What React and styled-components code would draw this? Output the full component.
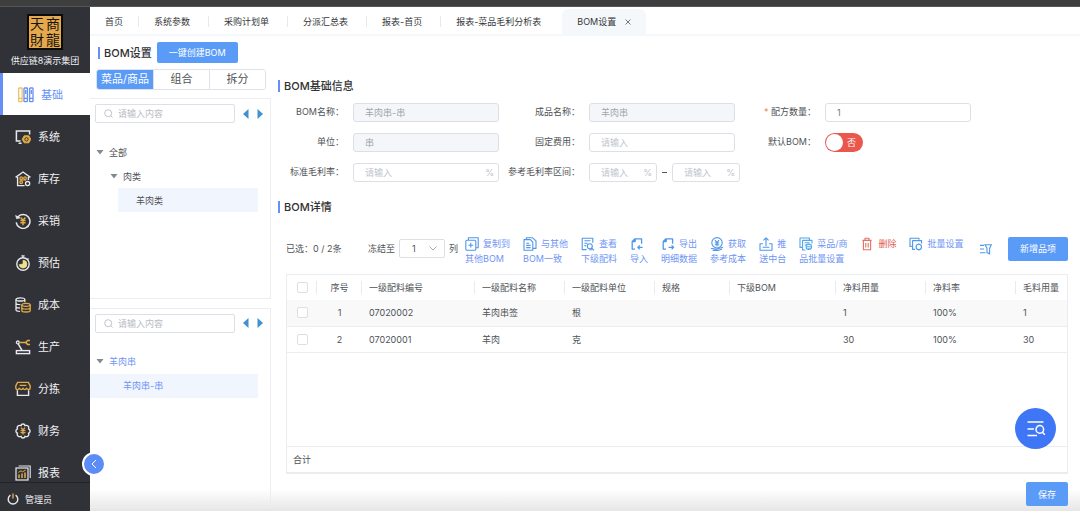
import React from "react";
import styled, { createGlobalStyle } from "styled-components";

const BLUE = "#5b9bf8";
const LINK = "#7095f4";
const GOLD = "#e2ab45";
const LIGHT = "#e9e9ec";

/* ---------- sidebar icons ---------- */

const SideSvg = ({ children }) => (
  <svg width="16" height="16" viewBox="0 0 16 16" fill="none" stroke={LIGHT} strokeWidth="1.3">
    {children}
  </svg>
);

const BasicIcon = () => (
  <SideSvg>
    <rect x="0.7" y="1" width="3.4" height="13.6" rx="0.6" stroke="#efc15c" />
    <path d="M0.7 11.4h3.4" stroke="#efc15c" />
    <rect x="6" y="1" width="3.4" height="13.6" rx="0.6" stroke="#6690f5" />
    <path d="M6 11.4h3.4M7.7 3v4" stroke="#6690f5" />
    <rect x="11.6" y="1" width="3.4" height="13.6" rx="0.6" stroke="#6690f5" />
    <path d="M11.6 11.4H15M13.3 3v4" stroke="#6690f5" />
  </SideSvg>
);

const SystemIcon = () => (
  <SideSvg>
    <path d="M5.6 12H1.4V2h13.2v3.4M3.6 14.2h3" strokeWidth="1.5" />
    <path d="M9.2 6.8h4.6l2 3.5-2 3.5H9.2l-2-3.5z" fill={GOLD} stroke={GOLD} strokeWidth="1" />
    <circle cx="11.5" cy="10.3" r="1.7" stroke="#313238" strokeWidth="0.9" />
  </SideSvg>
);

const StockIcon = () => (
  <SideSvg>
    <path d="M0.6 6.4 8 1l7.4 5.4M2.6 6v8.6h7M13.4 6v3" strokeWidth="1.4" />
    <circle cx="6.2" cy="7.2" r="1.3" stroke={GOLD} />
    <circle cx="10" cy="7.2" r="1.3" stroke={GOLD} />
    <circle cx="6.2" cy="11.2" r="1.3" stroke={GOLD} />
    <path d="M4.6 9.2h6.6" stroke={GOLD} strokeWidth="0.9" />
    <circle cx="12.6" cy="12.6" r="2.1" />
  </SideSvg>
);

const BuyIcon = () => (
  <SideSvg>
    <path d="M2.6 4.2A6.9 6.9 0 1 1 1.2 9.4" strokeWidth="1.5" />
    <path d="M0.6 2.4l1 3.4 3.4-.9z" fill={LIGHT} strokeWidth="0.6" />
    <path d="M5.6 4.4 8 7.2l2.4-2.8M5.4 7.6h5.2M5.4 9.8h5.2M8 7.2v5" stroke={GOLD} strokeWidth="1.5" />
  </SideSvg>
);

const ForecastIcon = () => (
  <SideSvg>
    <circle cx="8" cy="9" r="6.2" strokeWidth="1.4" />
    <path d="M6.4 0.8h3.2M8 1v2M12.6 3.4l1 1" />
    <path d="M8 5.2A3.9 3.9 0 1 1 4.2 9.6L8 9z" fill="#efe08c" stroke="#efe08c" strokeWidth="0.6" />
  </SideSvg>
);

const CostIcon = () => (
  <SideSvg>
    <ellipse cx="5.4" cy="2.4" rx="4.4" ry="1.6" />
    <path d="M1 2.4v10.4c0 .9 1.8 1.6 4 1.6M1 6c0 .9 2 1.6 4.4 1.6M1 9.4c0 .9 1.8 1.6 4 1.6M9.8 2.4v2.8" />
    <ellipse cx="11" cy="7.8" rx="4.2" ry="1.5" stroke={GOLD} />
    <path d="M6.8 7.8v5.6c0 .9 1.9 1.6 4.2 1.6s4.2-.7 4.2-1.6V7.8M6.8 10.6c0 .9 1.9 1.6 4.2 1.6s4.2-.7 4.2-1.6" stroke={GOLD} />
  </SideSvg>
);

const ProduceIcon = () => (
  <SideSvg>
    <rect x="1.4" y="11.6" width="13.2" height="3" strokeWidth="1.4" />
    <circle cx="2.8" cy="3.4" r="1.4" />
    <path d="M3.2 4.8 7 11.4" strokeWidth="1.5" />
    <path d="M4.4 3.4h6M15 1.4h-2.4l-2 2 2 2H15" stroke={GOLD} strokeWidth="1.5" />
  </SideSvg>
);

const SortIcon = () => (
  <SideSvg>
    <path d="M2.4 9.2v5.2h11.2V9.2" strokeWidth="1.4" />
    <path d="M2.6 1.4h10.8l1.8 3.6v1.8c0 2.4-3.4 2.4-3.6 0-.2 2.4-3.4 2.4-3.6 0-.2 2.4-3.4 2.4-3.6 0-.2 2.4-3.6 2.4-3.6 0V5z" stroke={GOLD} strokeWidth="1.4" />
    <path d="M4.6 4.4h6.8" stroke={GOLD} />
  </SideSvg>
);

const FinanceIcon = () => (
  <SideSvg>
    <path
      d="M6 2.600C6.400.4 9.600.4 10 2.600c2.400-.8 4.600 1 3.600 3.200 2 1 2 3.400 0 4.400 1 2.200-1.200 4-3.600 3.200-.4 2.200-3.600 2.200-4 0-2.400.8-4.600-1-3.600-3.200-2-1-2-3.400 0-4.400-1-2.200 1.200-4 3.600-3.200z"
      strokeWidth="1.4"
    />
    <path d="M6 4.8 8 7l2-2.2M5.6 7.6h4.8M5.6 9.6h4.8M8 7v4.4" stroke={GOLD} strokeWidth="1.3" />
  </SideSvg>
);

const ReportIcon = () => (
  <SideSvg>
    <path d="M3.6 1h11.6v12" strokeWidth="1.1" />
    <rect x="1" y="3" width="12" height="12" strokeWidth="1.2" />
    <path d="M4 13V9.6M7 13V8.6M10 13V7.6" stroke={GOLD} strokeWidth="1.5" />
    <path d="M3.4 7.4 6 5.8l1.6 1L10.6 5" stroke={GOLD} strokeWidth="1" />
  </SideSvg>
);

const menus = [
  { label: "基础", icon: BasicIcon, active: true },
  { label: "系统", icon: SystemIcon },
  { label: "库存", icon: StockIcon },
  { label: "采销", icon: BuyIcon },
  { label: "预估", icon: ForecastIcon },
  { label: "成本", icon: CostIcon },
  { label: "生产", icon: ProduceIcon },
  { label: "分拣", icon: SortIcon },
  { label: "财务", icon: FinanceIcon },
  { label: "报表", icon: ReportIcon },
];

/* ---------- toolbar icons ---------- */

const ToolSvg = ({ children, color = "#4f97ea" }) => (
  <svg width="14" height="14" viewBox="0 0 14 14" fill="none" stroke={color} strokeWidth="1.1" strokeLinejoin="round">
    {children}
  </svg>
);

const CopyIcon = () => (
  <ToolSvg>
    <rect x="0.8" y="3.2" width="10" height="10" rx="1" />
    <path d="M3.4 3V.8h9.8v10H11M5.8 5.8v4.8M3.4 8.2h4.8" />
  </ToolSvg>
);

const SameIcon = () => (
  <ToolSvg>
    <path d="M1 2.6h6.4l2.4 2.6v8H1z" />
    <path d="M3.4 2.4V.8h6.2l3.4 3v7.6h-3M3.2 6.2h3M3.2 8.4h4.4M3.2 10.6h4.4" />
  </ToolSvg>
);

const ViewIcon = () => (
  <ToolSvg>
    <path d="M5.6 12.6H1.2V1.2h10.6v4.6M3.4 3.8h6M3.4 6.2h3.2M3.4 8.6h1.8" />
    <circle cx="8.8" cy="9.2" r="2.5" />
    <path d="m10.6 11 2.4 2.4M8.2 12.8h3" />
  </ToolSvg>
);

const ImportIcon = () => (
  <ToolSvg>
    <path d="M5 12.2H2.2V4.4L5 1.8h6.6v5M5.2 2v2.6H2.4" strokeWidth="1.3" />
    <path d="M12.6 10.4H8M9.8 8.4l-2 2 2 2" strokeWidth="1.3" />
  </ToolSvg>
);

const ExportIcon = () => (
  <ToolSvg>
    <path d="M5 12.2H2.2V4.4L5 1.8h6.6v5M5.2 2v2.6H2.4" strokeWidth="1.3" />
    <path d="M7.6 10.4h4.8M10.6 8.4l2 2-2 2" strokeWidth="1.3" />
  </ToolSvg>
);

const FetchIcon = () => (
  <ToolSvg>
    <circle cx="7" cy="5.8" r="5.2" />
    <path d="M5 3.2 7 5.6l2-2.4M4.8 6h4.4M4.8 7.8h4.4M7 5.6v3.8M1 11.6c2-.8 3.4 1 6 .4l6-1.8M2.6 13.4h5.6l4-1.4" />
  </ToolSvg>
);

const PushIcon = () => (
  <ToolSvg>
    <path d="M4 6.8H1v6.4h12V6.8h-3M3.6 10.2h6.8" />
    <path d="M7 9V1M4.4 3.4 7 .8l2.6 2.6" />
  </ToolSvg>
);

const DishIcon = () => (
  <ToolSvg color="#52a5ec">
    <path d="M3.2 10.4H1V1h9.4v2" />
    <path d="M6.4 13H3.6V3.4H13v3M5.6 5.8h5M5.6 8h1.8" />
    <circle cx="9.8" cy="9.8" r="2.7" />
    <path d="M8 9.8h3.6M9.8 11v2" />
  </ToolSvg>
);

const TrashIcon = () => (
  <ToolSvg color="#e4705f">
    <path d="M2.4 3.4h9.2M5 3.2V1.2h4v2M3.400 3.6v9.2h7.200V3.6M5.8 6v4.6M8.2 6v4.6" />
  </ToolSvg>
);

const BatchIcon = () => (
  <ToolSvg>
    <path d="M2.8 9.4H1V1.2h9v1.6" />
    <path d="M6 12.4H3.6V3.6h9v3" />
    <circle cx="9.8" cy="10" r="2.7" />
    <path d="M9.8 6.6v1M9.8 12.4v1" />
  </ToolSvg>
);

const tools = [
  { icon: CopyIcon, lines: ["复制到", "其他BOM"] },
  { icon: SameIcon, lines: ["与其他", "BOM一致"] },
  { icon: ViewIcon, lines: ["查看", "下级配料"] },
  { icon: ImportIcon, lines: ["", "导入"] },
  { icon: ExportIcon, lines: ["导出", "明细数据"] },
  { icon: FetchIcon, lines: ["获取", "参考成本"] },
  { icon: PushIcon, lines: ["推", "送中台"] },
  { icon: DishIcon, lines: ["菜品/商", "品批量设置"] },
  { icon: TrashIcon, lines: ["删除"], danger: true },
  { icon: BatchIcon, lines: ["批量设置"] },
];

const tabs = ["首页", "系统参数", "采购计划单", "分派汇总表", "报表-首页", "报表-菜品毛利分析表"];

const columns = [
  { title: "序号", width: 45, center: true },
  { title: "一级配料编号", width: 113 },
  { title: "一级配料名称", width: 90 },
  { title: "一级配料单位", width: 90 },
  { title: "规格", width: 75 },
  { title: "下级BOM", width: 106 },
  { title: "净料用量", width: 90 },
  { title: "净料率", width: 90 },
  { title: "毛料用量" },
];

const rows = [
  ["1", "07020002", "羊肉串签", "根", "", "", "1", "100%", "1"],
  ["2", "07020001", "羊肉", "克", "", "", "30", "100%", "30"],
];

const Search = ({ label }) => (
  <SearchRow>
    <SearchBox>
      <svg width="9" height="9" viewBox="0 0 9 9" fill="none" stroke="#b9bdc6" strokeWidth="0.9">
        <circle cx="4.2" cy="4.2" r="3.5" />
        <path d="m6.7 6.7 1.8 1.8" />
      </svg>
      <input type="text" placeholder="请输入内容" aria-label={label} />
    </SearchBox>
    <ArrowButton type="button" aria-label="上一个">
      <svg width="6" height="10" viewBox="0 0 6 10" fill="#3f92d2">
        <path d="M5.5 0v10L0 5z" />
      </svg>
    </ArrowButton>
    <ArrowButton type="button" aria-label="下一个">
      <svg width="6" height="10" viewBox="0 0 6 10" fill="#3f92d2">
        <path d="M.5 0v10L6 5z" />
      </svg>
    </ArrowButton>
  </SearchRow>
);

const Caret = () => (
  <svg width="8" height="5" viewBox="0 0 8 5" fill="#85888f">
    <path d="M.5 0h7L4 4.5z" />
  </svg>
);

const App = () => {
  return (
    <>
      <GlobalStyle />
      <Page>
        <TopStrip />
        <Shell>
          <Sidebar>
            <Brand>
              <Logo>
                <span>天</span>
                <span>商</span>
                <span>財</span>
                <span>龍</span>
              </Logo>
              <BrandName>供应链8演示集团</BrandName>
            </Brand>
            <Menu>
              {menus.map(({ label, icon: Icon, active }) => (
                <MenuItem href="#" key={label} $active={active}>
                  <Icon />
                  {label}
                </MenuItem>
              ))}
            </Menu>
            <UserBar>
              <svg width="12" height="12" viewBox="0 0 12 12" fill="none" stroke={LIGHT} strokeWidth="1.4">
                <path d="M3.4 2.2a4.8 4.8 0 1 0 5.2 0" />
                <path d="M6 .4v5" stroke={GOLD} />
              </svg>
              管理员
            </UserBar>
            <CollapseButton type="button" aria-label="收起菜单">
              <svg width="6" height="10" viewBox="0 0 6 10" fill="none" stroke="#fff" strokeWidth="1">
                <path d="M5 1 1 5l4 4" />
              </svg>
            </CollapseButton>
          </Sidebar>

          <Content>
            <TabBar>
              {tabs.map((tab) => (
                <Tab href="#" key={tab}>
                  {tab}
                </Tab>
              ))}
              <ActiveTab>
                BOM设置
                <button type="button" aria-label="关闭">
                  <svg width="6" height="6" viewBox="0 0 6 6" stroke="#555" strokeWidth="0.8">
                    <path d="m.5.5 5 5M5.5.5l-5 5" />
                  </svg>
                </button>
              </ActiveTab>
            </TabBar>

            <Workspace>
              <TreeColumn>
                <TreeHeader>
                  <Title>BOM设置</Title>
                  <PrimaryButton type="button" $height={21}>
                    一键创建BOM
                  </PrimaryButton>
                </TreeHeader>
                <Segments>
                  <Segment type="button" $active>
                    菜品/商品
                  </Segment>
                  <Segment type="button">组合</Segment>
                  <Segment type="button">拆分</Segment>
                </Segments>
                <TreePanel>
                  <Search label="搜索分类" />
                  <Tree>
                    <TreeNode $level={0}>
                      <Caret />
                      全部
                    </TreeNode>
                    <TreeNode $level={1}>
                      <Caret />
                      肉类
                    </TreeNode>
                    <TreeNode $level={2} $selected>
                      羊肉类
                    </TreeNode>
                  </Tree>
                </TreePanel>
                <TreePanel>
                  <Search label="搜索菜品" />
                  <Tree>
                    <TreeNode $level={0} $link>
                      <Caret />
                      羊肉串
                    </TreeNode>
                    <TreeNode $level={0} $selected $link $leaf>
                      羊肉串-串
                    </TreeNode>
                  </Tree>
                </TreePanel>
              </TreeColumn>

              <Detail>
                <Title>BOM基础信息</Title>
                <Form>
                  <Label htmlFor="bomName">BOM名称：</Label>
                  <Field $disabled>
                    <input id="bomName" defaultValue="羊肉串-串" disabled />
                  </Field>
                  <Label htmlFor="product">成品名称：</Label>
                  <Field $disabled>
                    <input id="product" defaultValue="羊肉串" disabled />
                  </Field>
                  <Label htmlFor="amount">
                    <i>*</i> 配方数量：
                  </Label>
                  <Field>
                    <input id="amount" defaultValue="1" />
                  </Field>

                  <Label htmlFor="unit">单位：</Label>
                  <Field $disabled>
                    <input id="unit" defaultValue="串" disabled />
                  </Field>
                  <Label htmlFor="fee">固定费用：</Label>
                  <Field>
                    <input id="fee" placeholder="请输入" />
                  </Field>
                  <Label htmlFor="isDefault">默认BOM：</Label>
                  <Switch>
                    <input id="isDefault" type="checkbox" role="switch" />
                    <span>否</span>
                  </Switch>

                  <Label htmlFor="rate">标准毛利率：</Label>
                  <Field>
                    <input id="rate" placeholder="请输入" />
                    <span>%</span>
                  </Field>
                  <Label htmlFor="rateMin">参考毛利率区间：</Label>
                  <Range>
                    <Field>
                      <input id="rateMin" placeholder="请输入" />
                      <span>%</span>
                    </Field>
                    <RangeDash />
                    <Field>
                      <input placeholder="请输入" aria-label="参考毛利率上限" />
                      <span>%</span>
                    </Field>
                  </Range>
                </Form>

                <Title>BOM详情</Title>
                <Toolbar>
                  <Picked>已选：0 / 2条</Picked>
                  <Freeze>
                    <label htmlFor="freeze">冻结至</label>
                    <SelectBox>
                      <select id="freeze" defaultValue="1">
                        <option>1</option>
                        <option>2</option>
                        <option>3</option>
                      </select>
                      <svg width="8" height="5" viewBox="0 0 8 5" fill="none" stroke="#a0a3aa" strokeWidth="0.9">
                        <path d="M.5.5 4 4 7.5.5" />
                      </svg>
                    </SelectBox>
                    列
                  </Freeze>
                  <Tools>
                    {tools.map(({ icon: Icon, lines, danger }) => (
                      <Tool type="button" key={lines.join("")} $danger={danger}>
                        <ToolLine>
                          <Icon />
                          {lines[0]}
                        </ToolLine>
                        {lines[1] && <ToolLine>{lines[1]}</ToolLine>}
                      </Tool>
                    ))}
                  </Tools>
                  <FilterButton type="button" aria-label="筛选">
                    <svg width="12" height="12" viewBox="0 0 12 12" fill="none" stroke="#4f97ea" strokeWidth="1.1">
                      <path d="M0 2.4h4M0 6h4M0 9.8h5.5M5 1.8h6.4L9.6 5.2v5.6L7 9.6V5.2z" />
                    </svg>
                  </FilterButton>
                  <PrimaryButton type="button" $height={24}>
                    新增品项
                  </PrimaryButton>
                </Toolbar>

                <TableFrame>
                  <Table>
                    <colgroup>
                      <col width="30" />
                      {columns.map((c) => (
                        <col key={c.title} width={c.width} />
                      ))}
                    </colgroup>
                    <thead>
                      <tr>
                        <Th $center>
                          <Check type="checkbox" aria-label="全选" />
                        </Th>
                        {columns.map((c) => (
                          <Th key={c.title} $center={c.center}>
                            {c.title}
                          </Th>
                        ))}
                      </tr>
                    </thead>
                    <tbody>
                      {rows.map((row) => (
                        <Row key={row[0]}>
                          <Td $center>
                            <Check type="checkbox" aria-label={`选择第${row[0]}行`} />
                          </Td>
                          {row.map((cell, i) => (
                            <Td key={i} $center={columns[i].center}>
                              {cell}
                            </Td>
                          ))}
                        </Row>
                      ))}
                    </tbody>
                  </Table>
                  <Summary>合计</Summary>
                </TableFrame>

                <Actions>
                  <PrimaryButton type="button" $height={24}>
                    保存
                  </PrimaryButton>
                </Actions>
              </Detail>
            </Workspace>
          </Content>
        </Shell>
        <FloatButton type="button" aria-label="查询">
          <svg width="20" height="18" viewBox="0 0 20 18" fill="none" stroke="#fff" strokeWidth="1.5">
            <path d="M1.5 2h16M1.5 9H8M1.5 15.500H11" />
            <circle cx="13.8" cy="9.4" r="3.8" />
            <path d="m16.400 12.200 2.400 2.600" />
          </svg>
        </FloatButton>
      </Page>
    </>
  );
};

export default App;

//styles
const GlobalStyle = createGlobalStyle`
  * {
    box-sizing: border-box;
  }
  body {
    margin: 0;
    background: #fff;
    color: #505256;
    font-family: Inter, "Noto Sans CJK SC", sans-serif;
    font-size: 9px;
    line-height: 15px;
  }
  button, input, select {
    margin: 0;
    padding: 0;
    border: none;
    background: none;
    color: inherit;
    font: inherit;
  }
  input:focus, select:focus {
    outline: none;
  }
  a {
    color: inherit;
    text-decoration: none;
  }
  svg {
    display: block;
    flex: none;
  }
`;

const Page = styled.div`
  display: flex;
  flex-direction: column;
  height: 100vh;
  overflow: hidden;
`;

const TopStrip = styled.div`
  flex: none;
  height: 7px;
  background: #3e3e3e;
  border-bottom: 1px solid #55565a;
`;

const Shell = styled.div`
  display: flex;
  flex: 1;
  min-height: 0;
`;

const Sidebar = styled.aside`
  position: relative;
  display: flex;
  flex-direction: column;
  flex: none;
  width: 90px;
  background: #313238;
  color: #f0f0f2;
`;

const Brand = styled.div`
  display: flex;
  flex-direction: column;
  align-items: center;
  flex: none;
  gap: 3px;
  height: 66px;
  padding-top: 7px;
`;

const Logo = styled.div`
  display: grid;
  grid-template-columns: 16px 16px;
  grid-auto-rows: 16px;
  border: 2px solid #0d0b08;
  background: #e4a94e;
  color: #1a130a;
  font-family: "Liberation Sans", "Noto Sans CJK TC", sans-serif;
  font-size: 14px;
  line-height: 16px;
  text-align: center;
`;

const BrandName = styled.div`
  white-space: nowrap;
`;

const Menu = styled.nav`
  flex: 1;
  min-height: 0;
  overflow: hidden;
`;

const MenuItem = styled.a`
  display: flex;
  align-items: center;
  gap: 7px;
  height: 42px;
  padding: 2px 0 0 15px;
  font-size: 11px;
  ${({ $active }) =>
    $active &&
    `
    border-left: 3px solid #6690f5;
    background: #fff;
    color: #6690f5;
  `}
`;

const UserBar = styled.div`
  display: flex;
  align-items: center;
  flex: none;
  gap: 6px;
  height: 29px;
  padding: 4px 0 0 7px;
  border-top: 1px solid #222327;
`;

const CollapseButton = styled.button`
  position: absolute;
  right: -16px;
  bottom: 35px;
  z-index: 2;
  display: flex;
  align-items: center;
  justify-content: center;
  width: 24px;
  height: 24px;
  border: 2px solid #fff;
  border-radius: 50%;
  background: #5c8df6;
`;

const Content = styled.main`
  display: flex;
  flex-direction: column;
  flex: 1;
  min-width: 0;
  background: linear-gradient(to bottom, #fff calc(100% - 22px), #e6e6e6);
`;

const TabBar = styled.div`
  display: flex;
  flex: none;
  align-items: center;
  height: 29px;
  padding-top: 2px;
  border-bottom: 2px solid #f5f8fb;
  background: #fff;
  color: #35373b;
`;

const Tab = styled.a`
  padding: 0 18px 0 15px;
  border-right: 1px solid #e6e8ec;
  line-height: 11px;
  white-space: nowrap;
  &:first-child {
    padding-right: 15px;
  }
  &:nth-last-child(2) {
    padding-right: 20px;
    border-right-color: transparent;
  }
`;

const ActiveTab = styled.div`
  display: flex;
  align-items: center;
  align-self: flex-end;
  gap: 9px;
  height: 25px;
  padding: 0 15px;
  border-radius: 6px 6px 0 0;
  background: #f5f8fb;
`;

const Workspace = styled.div`
  display: flex;
  flex: 1;
  min-height: 0;
`;

const TreeColumn = styled.section`
  display: flex;
  flex-direction: column;
  flex: none;
  width: 181px;
  padding: 6px 0 3px;
`;

const TreeHeader = styled.div`
  display: flex;
  align-items: center;
  gap: 5px;
  padding-left: 8px;
`;

const Title = styled.h2`
  display: flex;
  align-items: center;
  gap: 4px;
  margin: 0;
  color: #303133;
  font-size: 11px;
  font-weight: 500;
  line-height: 16px;
  white-space: nowrap;
  &::before {
    content: "";
    width: 2px;
    height: 12px;
    background: #6690f5;
  }
`;

const PrimaryButton = styled.button`
  flex: none;
  height: ${({ $height }) => $height}px;
  padding: 0 12px;
  border-radius: 2px;
  background: ${BLUE};
  color: #fff;
`;

const Segments = styled.div`
  display: grid;
  grid-template-columns: repeat(3, 1fr);
  margin: 6px 5px 8px 6px;
  border: 1px solid #dfe2e8;
  border-radius: 3px;
  overflow: hidden;
`;

const Segment = styled.button`
  height: 19px;
  background: ${({ $active }) => ($active ? BLUE : "#fff")};
  color: ${({ $active }) => ($active ? "#fff" : "inherit")};
  font-size: 11px;
  & + & {
    border-left: 1px solid #dfe2e8;
  }
`;

const TreePanel = styled.div`
  flex: 1;
  min-height: 0;
  padding-top: 5px;
  border: 1px solid #ebedf1;
  border-left: none;
  & + & {
    margin-top: 9px;
  }
`;

const SearchRow = styled.div`
  display: flex;
  align-items: center;
  gap: 8px;
  padding: 0 7px 0 5px;
`;

const SearchBox = styled.div`
  display: flex;
  align-items: center;
  flex: 1;
  gap: 5px;
  height: 19px;
  padding-left: 8px;
  border: 1px solid #dcdfe6;
  border-radius: 2px;
  input {
    width: 100%;
    min-width: 0;
  }
  input::placeholder {
    color: #b9bcc4;
  }
`;

const ArrowButton = styled.button`
  width: 6px;
  height: 10px;
`;

const Tree = styled.div`
  margin: 17px 12px 0 0;
`;

const TreeNode = styled.div`
  display: flex;
  align-items: center;
  gap: 5px;
  height: 24px;
  margin-left: ${({ $level }) => $level * 14}px;
  padding-left: ${({ $level, $leaf }) => ($leaf ? 33 : $level === 2 ? 18 : 6)}px;
  background: ${({ $selected }) => ($selected ? "#f0f5fe" : "none")};
  color: ${({ $link }) => ($link ? LINK : "inherit")};
`;

const Detail = styled.section`
  display: flex;
  flex-direction: column;
  flex: 1;
  min-width: 0;
  padding: 42px 12px 5px 7px;
`;

const Form = styled.div`
  display: grid;
  grid-template-columns: repeat(3, 72px 146px);
  grid-auto-rows: 19px;
  gap: 11px 9px;
  margin: 9px 0 17px -6px;
`;

const Label = styled.label`
  line-height: 17px;
  text-align: right;
  white-space: nowrap;
  i {
    color: #e8864f;
    font-style: normal;
  }
`;

const Field = styled.div`
  display: flex;
  align-items: center;
  padding: 0 4px 0 11px;
  border: 1px solid #dcdfe6;
  border-radius: 3px;
  background: ${({ $disabled }) => ($disabled ? "#f4f6f9" : "#fff")};
  color: ${({ $disabled }) => ($disabled ? "#a3a6ad" : "#77797e")};
  input {
    flex: 1;
    width: 100%;
    min-width: 0;
  }
  input::placeholder {
    color: #c0c4cc;
  }
  span {
    color: #bfc2c9;
  }
`;

const Range = styled.div`
  display: grid;
  grid-template-columns: 68px 5px 68px;
  gap: 5px;
`;

const RangeDash = styled.span`
  align-self: center;
  height: 1px;
  background: #505256;
`;

const Switch = styled.label`
  display: flex;
  align-items: center;
  width: 38px;
  border-radius: 10px;
  background: #e9574d;
  color: #fff;
  input {
    appearance: none;
    width: 17px;
    height: 17px;
    margin: 0 4px 0 1px;
    border-radius: 50%;
    background: #fff;
  }
`;

const Toolbar = styled.div`
  display: flex;
  align-items: center;
  margin: 16px 0 8px 8px;
  white-space: nowrap;
`;

const Picked = styled.span`
  width: 82px;
`;

const Freeze = styled.div`
  display: flex;
  align-items: center;
  gap: 4px;
  margin-right: 7px;
`;

const SelectBox = styled.div`
  display: flex;
  align-items: center;
  width: 46px;
  height: 19px;
  padding: 0 7px 0 12px;
  border: 1px solid #dcdfe6;
  border-radius: 2px;
  select {
    flex: 1;
    appearance: none;
  }
`;

const Tools = styled.div`
  display: flex;
  align-items: flex-start;
  flex: 1;
  gap: 13px;
  padding-top: 5px;
`;

const Tool = styled.button`
  color: ${({ $danger }) => ($danger ? "#e0604e" : LINK)};
  text-align: left;
`;

const ToolLine = styled.span`
  display: flex;
  align-items: center;
  gap: 4px;
  height: 15px;
`;

const FilterButton = styled.button`
  margin-right: 16px;
`;

const TableFrame = styled.div`
  display: flex;
  flex-direction: column;
  flex: 1;
  min-height: 0;
  margin-left: 8px;
  border: 1px solid #ebecef;
  border-bottom-width: 2px;
  background: #fff;
`;

const Table = styled.table`
  width: 100%;
  border-collapse: collapse;
  table-layout: fixed;
`;

const Th = styled.th`
  height: 25px;
  padding: 0 0 0 ${({ $center }) => ($center ? 0 : 7)}px;
  background: linear-gradient(#e8eaee, #e8eaee) right center / 1px 13px no-repeat;
  font-weight: 400;
  text-align: ${({ $center }) => ($center ? "center" : "left")};
  white-space: nowrap;
  &:last-child {
    background: none;
  }
`;

const Row = styled.tr`
  border-bottom: 1px solid #ededf0;
  &:nth-child(odd) {
    background: #f9f9f9;
  }
`;

const Td = styled.td`
  height: 26px;
  padding: 0 0 0 ${({ $center }) => ($center ? 0 : 7)}px;
  text-align: ${({ $center }) => ($center ? "center" : "left")};
`;

const Check = styled.input`
  appearance: none;
  display: block;
  width: 11px;
  height: 11px;
  margin: 0 auto;
  border: 1px solid #dcdfe6;
  border-radius: 2px;
  background: #fff;
`;

const Summary = styled.div`
  margin-top: auto;
  padding: 5px 6px;
  border-top: 1px solid #ebecef;
`;

const Actions = styled.div`
  display: flex;
  justify-content: flex-end;
  margin-top: 8px;
`;

const FloatButton = styled.button`
  position: fixed;
  right: 24px;
  bottom: 62px;
  display: flex;
  align-items: center;
  justify-content: center;
  width: 41px;
  height: 41px;
  border-radius: 50%;
  background: #3f76f5;
`;
